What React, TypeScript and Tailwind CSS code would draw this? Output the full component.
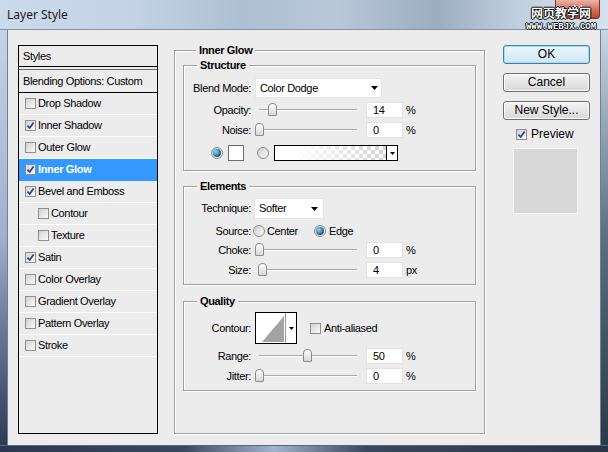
import React from "react";

type Item = { name: string; on?: boolean; sub?: boolean; sel?: boolean };

const styleItems: Item[] = [
  { name: "Drop Shadow" },
  { name: "Inner Shadow", on: true },
  { name: "Outer Glow" },
  { name: "Inner Glow", on: true, sel: true },
  { name: "Bevel and Emboss", on: true },
  { name: "Contour", sub: true },
  { name: "Texture", sub: true },
  { name: "Satin", on: true },
  { name: "Color Overlay" },
  { name: "Gradient Overlay" },
  { name: "Pattern Overlay" },
  { name: "Stroke" },
];

function Check({ on }: { on?: boolean }) {
  return (
    <span className="flex h-[11px] w-[11px] shrink-0 items-center justify-center border border-[#8e8f8f] bg-gradient-to-br from-[#d2d2d2] to-[#fbfbfb]">
      {on && (
        <svg width="9" height="9" viewBox="0 0 9 9">
          <path d="M1.5 4.6 L3.7 7 L7.6 1.6" fill="none" stroke="#2b3d8e" strokeWidth="1.7" />
        </svg>
      )}
    </span>
  );
}

function Radio({ on }: { on?: boolean }) {
  return (
    <span className="flex h-[12px] w-[12px] shrink-0 items-center justify-center rounded-full border border-[#8b8b8b] bg-gradient-to-br from-[#cfcfcf] to-[#fafafa]">
      {on && <span className="h-[8px] w-[8px] rounded-full bg-[radial-gradient(circle_at_35%_35%,#9bdcf5,#1f6b96_60%,#0f3f5e)]" />}
    </span>
  );
}

function Arrow() {
  return (
    <svg width="7" height="4" viewBox="0 0 7 4">
      <path d="M0 0 H7 L3.5 4 Z" fill="#000" />
    </svg>
  );
}

function Slider({ pct }: { pct: number }) {
  return (
    <div className="relative h-[16px] w-[102px]">
      {/* track */}
      <div className="absolute left-[4px] right-0 top-[7px] h-[2px] border-t border-b border-t-[#a9a9a9] border-b-white" />
      <div
        className="absolute top-[1px] h-[13px] w-[9px] rounded-t-[4px] rounded-b-[1px] border border-[#8a8a8a] bg-gradient-to-b from-white to-[#d6d6d6]"
        style={{ left: Math.round(pct * 96) }}
      />
    </div>
  );
}

function NumBox({ value }: { value: string }) {
  return (
    <div className="flex h-[16px] w-[37px] items-center border border-[#e2e2e2] bg-white pl-[6px]">{value}</div>
  );
}

function SliderRow({ label, value, pct, unit }: { label: string; value: string; pct: number; unit: string }) {
  return (
    <div className="mt-[4px] flex h-[16px] items-center">
      <span className="w-[67px] text-right">{label}</span>
      <div className="ml-[4px]">
        <Slider pct={pct} />
      </div>
      <div className="ml-[9px]">
        <NumBox value={value} />
      </div>
      <span className="ml-[3px]">{unit}</span>
    </div>
  );
}

function Group({ title, className, children }: { title: string; className: string; children?: React.ReactNode }) {
  return (
    <div className={"flex flex-col border border-[#a0a0a0] shadow-[inset_1px_1px_0_#fff,1px_1px_0_#fff] " + className}>
      <div className="-mt-[7px] ml-[13px] h-[13px] w-fit bg-[#ececec] px-[3px] font-bold leading-[13px]">{title}</div>
      {children}
    </div>
  );
}

function TitleBar() {
  return (
    <div className="relative flex h-[30px] shrink-0 items-center border-b border-[#8193ab] bg-[linear-gradient(90deg,#cbdaeb_0%,#c3d3e5_22%,#adbfd3_40%,#b9c8d9_55%,#9cadc1_72%,#c0cfdf_85%,#d6e2ee_100%)] pl-[7px]">
      <span className="font-['Noto_Sans',sans-serif] text-[12px] tracking-normal text-[#1b1b1b]">Layer Style</span>
      <div className="ml-auto mr-[8px] flex h-[19px] w-[45px] items-center justify-center self-start rounded-b-[4px] border border-t-0 border-[#7a3328] bg-gradient-to-b from-[#eab3a7] via-[#d67564] to-[#c3402c]">
        <svg width="10" height="9" viewBox="0 0 10 9">
          <path d="M1 0.5 L9 8.5 M9 0.5 L1 8.5" stroke="#fff" strokeWidth="2" />
        </svg>
      </div>
      {/* site watermark */}
      <div className="absolute right-[11px] top-[6px] flex w-[72px] flex-col items-center tracking-normal text-white [text-shadow:1px_0_0_#000,-1px_0_0_#000,0_1px_0_#000,0_-1px_0_#000]">
        <span className="font-['Noto_Sans_CJK_SC',sans-serif] text-[12px] font-bold leading-[14px]">网页教学网</span>
        <span className="mt-[3px] font-['Liberation_Mono',monospace] text-[9px] font-bold leading-[8px]">WWW.WEBJX.COM</span>
      </div>
    </div>
  );
}

function StyleList() {
  return (
    <div className="flex h-[389px] w-[140px] shrink-0 flex-col border border-black">
      <div className="flex h-[21px] items-center border-b border-black pl-[4px]">Styles</div>
      <div className="mt-[2px] flex h-[24px] items-center border-t border-b border-t-[#6a6a6a] border-b-black pl-[4px]">
        Blending Options: Custom
      </div>
      {styleItems.map((it) => (
        <div
          key={it.name}
          className={
            "flex h-[22px] items-center border-b " +
            (it.sub ? "pl-[19px] " : "pl-[6px] ") +
            (it.sel ? "border-[#3399ff] bg-[#3399ff] font-bold text-white" : "border-white")
          }
        >
          <Check on={it.on} />
          <span className="ml-[2px]">{it.name}</span>
        </div>
      ))}
    </div>
  );
}

function Btn({ children, primary, className = "" }: { children: React.ReactNode; primary?: boolean; className?: string }) {
  return (
    <div
      className={
        "flex h-[19px] items-center justify-center rounded-[3px] border text-[12px] tracking-normal " +
        (primary
          ? "border-[#3c7fb1] bg-gradient-to-b from-[#edf6fb] to-[#cfe6f3] shadow-[inset_0_0_0_1px_#a9dcf5] "
          : "border-[#707070] bg-gradient-to-b from-[#f3f3f3] to-[#d9d9d9] shadow-[inset_0_0_0_1px_#fcfcfc] ") +
        className
      }
    >
      {children}
    </div>
  );
}

function InnerGlow() {
  return (
    <Group title="Inner Glow" className="ml-[16px] mt-[5px] h-[384px] w-[311px] shrink-0 px-[8px]">
      <Group title="Structure" className="mt-[8px] h-[106px]">
        <div className="mt-[6px] flex h-[20px] items-center">
          <span className="w-[67px] text-right">Blend Mode:</span>
          <div className="ml-[4px] flex h-[20px] w-[127px] items-center justify-between border border-[#e4e4e4] bg-white pl-[4px] pr-[3px]">
            <span>Color Dodge</span>
            <Arrow />
          </div>
        </div>
        <SliderRow label="Opacity:" value="14" pct={0.14} unit="%" />
        <SliderRow label="Noise:" value="0" pct={0} unit="%" />
        <div className="mt-[7px] flex h-[16px] items-center pl-[27px]">
          <Radio on />
          <span className="ml-[5px] h-[16px] w-[16px] border border-[#6d6d6d] bg-white" />
          <span className="ml-[13px]">
            <Radio />
          </span>
          <div className="ml-[5px] flex h-[16px] w-[124px] border border-black">
            <div className="flex-1 bg-[linear-gradient(90deg,#fff_15%,rgba(255,255,255,0)),repeating-conic-gradient(#d3d3d3_0_25%,#fff_0_50%)] bg-[length:100%_100%,8px_8px]" />
            <div className="flex w-[11px] items-center justify-center border-l border-black bg-white">
              <svg width="5" height="3" viewBox="0 0 5 3">
                <path d="M0 0 H5 L2.5 3 Z" fill="#000" />
              </svg>
            </div>
          </div>
        </div>
      </Group>

      <Group title="Elements" className="mt-[15px] h-[99px]">
        <div className="mt-[5px] flex h-[21px] items-center">
          <span className="w-[67px] text-right">Technique:</span>
          <div className="ml-[3px] flex h-[21px] w-[70px] items-center justify-between border border-[#e4e4e4] bg-white pl-[4px] pr-[5px]">
            <span>Softer</span>
            <Arrow />
          </div>
        </div>
        <div className="mt-[5px] flex h-[14px] items-center">
          <span className="w-[67px] text-right">Source:</span>
          <span className="ml-[2px]">
            <Radio />
          </span>
          <span className="ml-[2px]">Center</span>
          <span className="ml-[16px]">
            <Radio on />
          </span>
          <span className="ml-[3px]">Edge</span>
        </div>
        <SliderRow label="Choke:" value="0" pct={0} unit="%" />
        <SliderRow label="Size:" value="4" pct={0.03} unit="px" />
      </Group>

      <Group title="Quality" className="mt-[16px] h-[90px]">
        <div className="mt-[4px] flex h-[32px] items-center">
          <span className="w-[67px] text-right">Contour:</span>
          <div className="ml-[4px] flex h-[32px] w-[42px] border border-black bg-white">
            <svg width="29" height="30" viewBox="0 0 29 30">
              <polygon points="6,29 28,3 28,29" fill="#a3a3a3" />
            </svg>
            <div className="flex flex-1 items-center justify-center border-l border-[#9a9a9a]">
              <svg width="5" height="3" viewBox="0 0 5 3">
                <path d="M0 0 H5 L2.5 3 Z" fill="#000" />
              </svg>
            </div>
          </div>
          <span className="ml-[13px]">
            <Check />
          </span>
          <span className="ml-[3px]">Anti-aliased</span>
        </div>
        <SliderRow label="Range:" value="50" pct={0.5} unit="%" />
        <SliderRow label="Jitter:" value="0" pct={0} unit="%" />
      </Group>
    </Group>
  );
}

function Buttons() {
  return (
    <div className="ml-[18px] flex w-[87px] shrink-0 flex-col">
      <Btn primary>OK</Btn>
      <Btn className="mt-[9px]">Cancel</Btn>
      <Btn className="mt-[9px]">New Style...</Btn>
      <div className="mt-[7px] flex h-[14px] items-center pl-[13px]">
        <Check on />
        <span className="ml-[4px] text-[12px] tracking-normal">Preview</span>
      </div>
      <div className="ml-[10px] mt-[7px] h-[66px] w-[65px] border border-[#f6f6f6] bg-[#d8d8d8]" />
    </div>
  );
}

export default function App() {
  return (
    <div className="flex h-[452px] w-[608px] flex-col overflow-hidden bg-[#1f2636] font-['Liberation_Sans',Arial,sans-serif] text-[11px] leading-[13px] tracking-[-0.35px] text-black">
      <TitleBar />
      <div className="flex h-[415px] shrink-0">
        <div className="w-[8px] border-r border-[#6f7f96] bg-gradient-to-b from-[#c3d4e8] via-[#9fb1c9] to-[#2f3a55]" />
        <div className="flex w-[592px] bg-[#ececec] pl-[10px] pt-[15px]">
          <StyleList />
          <InnerGlow />
          <Buttons />
        </div>
        <div className="w-[8px] border-l border-[#6f7f96] bg-gradient-to-b from-[#c9d6e4] via-[#5e6e82] to-[#2b3a44]" />
      </div>
      <div className="h-[7px] border-t border-[#59657a] bg-[linear-gradient(90deg,#2d3650,#3a4660_30%,#9fb4cf_45%,#3b475e_60%,#2b3346)]" />
    </div>
  );
}
